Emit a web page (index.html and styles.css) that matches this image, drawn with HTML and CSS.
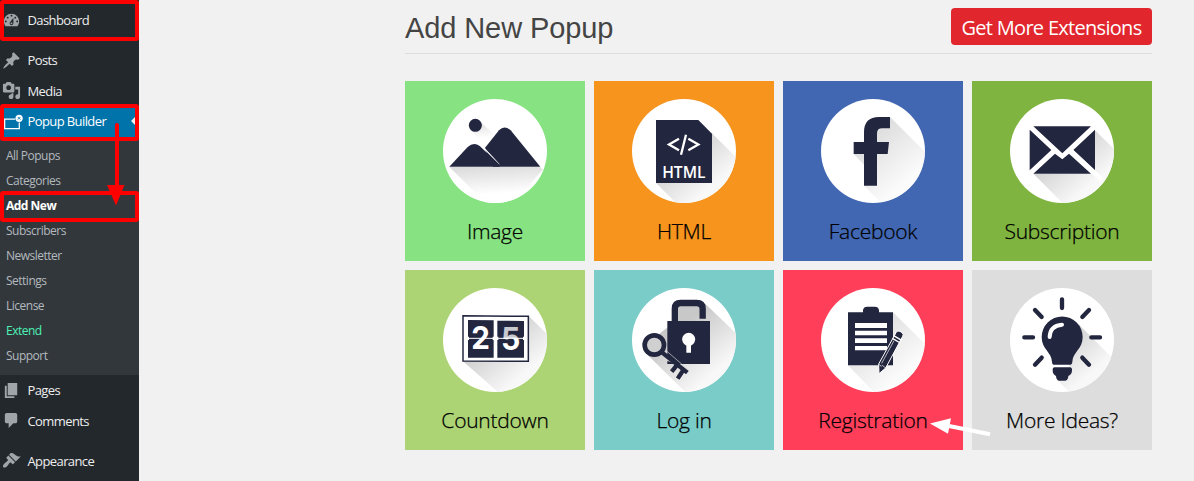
FILE: index.html
```html
<!DOCTYPE html>
<html lang="en">
<head>
    <meta charset="UTF-8">
    <meta name="viewport" content="width=device-width, initial-scale=1.0">
    <title>Add New Popup</title>
    <link rel="stylesheet" href="styles.css">
</head>
<body>
    <nav class="sidebar">
        <a class="menu-item">
            <svg class="menu-icon" viewBox="0 0 20 20"><path d="M3.76 16h12.48c1.1-1.37 1.76-3.11 1.76-5 0-4.42-3.58-8-8-8s-8 3.58-8 8c0 1.89.66 3.63 1.76 5zM10 4c.55 0 1 .45 1 1s-.45 1-1 1-1-.45-1-1 .45-1 1-1zM6 6c.55 0 1 .45 1 1s-.45 1-1 1-1-.45-1-1 .45-1 1-1zm8 0c.55 0 1 .45 1 1s-.45 1-1 1-1-.45-1-1 .45-1 1-1zm-5.37 5.55L12 7v6c0 1.1-.9 2-2 2s-2-.9-2-2c0-.57.24-1.08.63-1.45zM4 10c.55 0 1 .45 1 1s-.45 1-1 1-1-.45-1-1 .45-1 1-1zm12 0c.55 0 1 .45 1 1s-.45 1-1 1-1-.45-1-1 .45-1 1-1zm-5 3c0-.55-.45-1-1-1s-1 .45-1 1 .45 1 1 1 1-.45 1-1z"/></svg>
            <span>Dashboard</span>
        </a>
        <div class="separator"></div>
        <a class="menu-item">
            <svg class="menu-icon" viewBox="0 0 20 20"><path d="M10.44 3.02l1.82-1.82 6.36 6.35-1.83 1.82c-1.05-.68-2.48-.57-3.41.36l-.75.75c-.92.93-1.04 2.35-.35 3.41l-1.83 1.82-2.41-2.41-2.8 2.79c-.42.42-3.38 2.71-3.8 2.29s1.86-3.39 2.28-3.81l2.79-2.79L4.1 9.36l1.83-1.82c1.05.69 2.48.57 3.4-.36l.75-.75c.93-.92 1.05-2.35.36-3.41z"/></svg>
            <span>Posts</span>
        </a>
        <a class="menu-item">
            <svg class="menu-icon" viewBox="0 0 20 20"><path d="M13 11V4c0-.55-.45-1-1-1h-1.67L9 1H5L3.67 3H2c-.55 0-1 .45-1 1v7c0 .55.45 1 1 1h10c.55 0 1-.45 1-1zM7 4.5c1.38 0 2.5 1.12 2.5 2.5S8.38 9.5 7 9.5 4.5 8.38 4.5 7 5.62 4.5 7 4.5zM14 6h5v10.5c0 1.38-1.12 2.5-2.5 2.5S14 17.88 14 16.5s1.12-2.5 2.5-2.5c.17 0 .34.02.5.05V9h-3V6zm-4 8.05V13h2v3.5c0 1.38-1.12 2.5-2.5 2.5S7 17.88 7 16.5 8.12 14 9.5 14c.17 0 .34.02.5.05z"/></svg>
            <span>Media</span>
        </a>
        <a class="menu-item current">
            <svg class="menu-icon popup-icon" viewBox="0 0 20 20">
                <path d="M14 7.500H2.800v10h15.400v-6.500" fill="none" stroke="#fff" stroke-width="1.300"/>
                <circle cx="18" cy="6.600" r="3.800" fill="#fff"/>
                <path d="M16.600 5.200l2.800 2.800m0-2.800l-2.800 2.800" stroke="#0073aa" stroke-width=".9"/>
            </svg>
            <span>Popup Builder</span>
        </a>
        <ul class="submenu">
            <li>All Popups</li>
            <li>Categories</li>
            <li class="active">Add New</li>
            <li>Subscribers</li>
            <li>Newsletter</li>
            <li>Settings</li>
            <li>License</li>
            <li class="extend">Extend</li>
            <li>Support</li>
        </ul>
        <a class="menu-item">
            <svg class="menu-icon" viewBox="0 0 20 20"><path d="M6 15V2h10v13H6zm-1 1h8v2H3V5h2v11z"/></svg>
            <span>Pages</span>
        </a>
        <a class="menu-item">
            <svg class="menu-icon" viewBox="0 0 20 20"><path d="M5 2h9c1.1 0 2 .9 2 2v7c0 1.1-.9 2-2 2h-2l-5 5v-5H5c-1.1 0-2-.9-2-2V4c0-1.1.9-2 2-2z"/></svg>
            <span>Comments</span>
        </a>
        <div class="separator"></div>
        <a class="menu-item">
            <svg class="menu-icon" viewBox="0 0 20 20"><path d="M14.48 11.06L7.41 3.99l1.5-1.5c.5-.56 2.3-.47 3.51.32 1.21.8 1.43 1.28 2.91 2.1 1.18.64 2.45 1.26 4.45.85zm-.71.71L6.7 4.7 4.93 6.47c-.39.39-.39 1.02 0 1.41l1.06 1.06c.39.39.39 1.03 0 1.42-.6.6-1.43 1.11-2.21 1.69-.35.26-.7.53-1.01.84C1.43 14.23.4 16.08 1.4 17.07c.99 1 2.84-.03 4.18-1.36.31-.31.58-.66.85-1.02.57-.78 1.08-1.61 1.69-2.21.39-.39 1.02-.39 1.41 0l1.06 1.06c.39.39 1.02.39 1.41 0z"/></svg>
            <span>Appearance</span>
        </a>
    </nav>

    <main class="content">
        <header class="page-header">
            <h1>Add New Popup</h1>
            <a class="extensions-button">Get More Extensions</a>
        </header>
        <div class="popup-types">
            <div class="tile image">
                <svg class="tile-icon" viewBox="0 0 312 312">
                    <defs>
                        <linearGradient id="shadow" gradientUnits="userSpaceOnUse" x1="130" y1="130" x2="240" y2="260">
                            <stop offset="0" stop-color="#c8c8c8"/>
                            <stop offset="1" stop-color="#f8f8f8"/>
                        </linearGradient>
                        <linearGradient id="groundShadow" x1="0" y1="0" x2=".15" y2="1">
                            <stop offset="0" stop-color="#dadada"/>
                            <stop offset=".8" stop-color="#fff"/>
                        </linearGradient>
                    </defs>
                    <path class="ground" d="M19 204H292L300 212L210 312H128Z"/>
                    <path class="ground" d="M112 68L150 104L124 134L82 92Z"/>
                    <circle class="ink" cx="97" cy="79" r="19.500"/>
                    <path class="ink" d="M125 148L168 94Q184 77 203 94L292 203H150Z"/>
                    <path d="M117 143L169 196L125 148Z" fill="#fff" stroke="#fff" stroke-width="2"/>
                    <path class="ink" d="M19 203L74 144Q92 128 110 141L170 197V203Z"/>
                </svg>
                <span>Image</span>
            </div>
            <div class="tile html">
                <svg class="tile-icon" viewBox="0 0 312 312">
                    <path class="shade" d="M240 103L312 175V312H132L72 252Z"/>
                    <path class="ink" d="M72 63H199L240 104V252H72Z"/>
                    <path class="code" d="M141 119L111 136.500L141 154M169 119L199 136.500L169 154M162 107L147 167"/>
                    <text class="file-text" x="155.500" y="237" textLength="130" lengthAdjust="spacingAndGlyphs">HTML</text>
                </svg>
                <span>HTML</span>
            </div>
            <div class="tile facebook">
                <svg class="tile-icon" viewBox="0 0 312 312">
                    <path class="shade light" d="M207 54L312 158V312H181L129 260V197L98 165L168 150V100Z"/>
                    <path class="ink" d="M129 260V165H98V129H129V100Q129 54 174 54H207V88H184Q168 88 168 104V129H204L200 165H168V260Z"/>
                </svg>
                <span>Facebook</span>
            </div>
            <div class="tile subscription">
                <svg class="tile-icon" viewBox="0 0 312 312">
                    <path class="shade" d="M255 94L312 150V312H158L70 224L255 213Z"/>
                    <path d="M60 82H255V224H60Z" fill="#fff"/>
                    <path class="ink" d="M70 82H243L157 163ZM59 92L124 153L59 214ZM255 92V214L190 153ZM70 224L135 164L157 181L177 164L243 224Z"/>
                    <path d="M185 158L276 243" stroke="#fff" stroke-width="14"/>
                </svg>
                <span>Subscription</span>
            </div>
            <div class="tile countdown">
                <svg class="tile-icon" viewBox="0 0 312 312">
                    <path class="shade" d="M257 84L312 138V312H165L60 220Z"/>
                    <path d="M60 83L256 85V220L60 219Z" fill="#fff" stroke="#23263f" stroke-width="4.500"/>
                    <path class="ink" d="M75 96L152 97V209H75ZM163 98L243 99V209H163Z"/>
                    <text class="digit" x="113" y="184" textLength="56" lengthAdjust="spacingAndGlyphs">2</text>
                    <text class="digit" x="203" y="185" textLength="58" lengthAdjust="spacingAndGlyphs">5</text>
                    <path d="M172 110H234V149H172Z" fill="#23263f" opacity=".25"/>
                    <path d="M75 151H243" stroke="#fff" stroke-width="3"/>
                    <path d="M75 146v10M152 146v10M163 146v10M243 146v10" stroke="#fff" stroke-width="6"/>
                </svg>
                <span>Countdown</span>
            </div>
            <div class="tile login">
                <svg class="tile-icon" viewBox="0 0 312 312">
                    <path class="shade" d="M218 46L312 136V312H160L40 194L66 150L130 100V50Z"/>
                    <path d="M128.500 104V62Q128.500 45 146 45H194Q212 45 212 62V92" fill="none" stroke="#23263f" stroke-width="19"/>
                    <path class="ink" d="M106 99H234V228H106Z"/>
                    <circle cx="170" cy="154" r="19.500" fill="#fff"/>
                    <path d="M163 164H177V194H163Z" fill="#fff"/>
                    <path d="M104 202L140 230L104 218Z" fill="#d0d0d0"/>
                    <path d="M98 184L172 248" stroke="#d8d8d8" stroke-width="2"/>
                    <circle cx="67" cy="171" r="29" fill="#d0d0d0" stroke="#23263f" stroke-width="14"/>
                    <path d="M87 191L166 254M136 230L119 251M154 246L137 272" fill="none" stroke="#23263f" stroke-width="13"/>
                </svg>
                <span>Log in</span>
            </div>
            <div class="tile registration">
                <svg class="tile-icon" viewBox="0 0 312 312">
                    <path class="shade light" d="M216 73L312 168V312H158L81 232Z"/>
                    <path class="ink" d="M81 73H126V66Q128 56 138 56H162Q172 56 174 66V73H216V232H81Z"/>
                    <path d="M102 105H198V120H102ZM102 128H198V142H102ZM102 151H198V165H102ZM102 174H198V187H102Z" fill="#fff"/>
                    <path d="M225 134Q229 126 237 130L243 134Q249 138 245 145L194 240L174 257L173 228Z" fill="#23263f" stroke="#fff" stroke-width="3"/>
                    <path d="M218 143L242 157M214 151L238 165" stroke="#fff" stroke-width="4"/>
                    <path d="M182 226L219 158M174 229L181 235L184 232L194 240" fill="none" stroke="#fff" stroke-width="2"/>
                </svg>
                <span>Registration</span>
            </div>
            <div class="tile ideas">
                <svg class="tile-icon" viewBox="0 0 312 312">
                    <path class="shade" d="M205 108L312 215V312H178L140 274L175 240L190 200Z"/>
                    <path class="ink" d="M130 230Q126 228 126 222C125 192 95 184 95 147A61 61 0 0 1 218 147C218 184 188 192 187 222Q187 228 182 230Z"/>
                    <path class="ink" d="M134 238H180Q187 239 186 247Q186 260 175 264Q174 277 166 278H147Q139 277 138 264Q128 260 128 247Q127 239 134 238Z"/>
                    <path d="M119 147Q120 113 156 110" fill="none" stroke="#fff" stroke-width="12" stroke-linecap="round"/>
                    <path class="rays" d="M156 34V60M75 66L95 87M237 66L217 87M43 148H69M244 148H270M75 230L95 209M237 230L217 209"/>
                </svg>
                <span>More Ideas?</span>
            </div>
        </div>
    </main>

    <!-- walkthrough marks drawn over the page -->
    <svg class="marks" viewBox="0 0 1194 481">
        <g fill="none" stroke="#f00" stroke-width="4">
            <rect x="2" y="2" width="135" height="37" rx="1"/>
            <rect x="2" y="106" width="135" height="33" rx="1"/>
            <rect x="2" y="193" width="135" height="27" rx="1"/>
            <path d="M117 125V188" stroke-linecap="round"/>
        </g>
        <path d="M107 185H124.500L116 205.500Z" fill="#f00"/>
        <path d="M949 426L990 434.300" stroke="#fff" stroke-width="4"/>
        <path d="M930 423.600L951 418.200L948 433.800Z" fill="#fff"/>
    </svg>
</body>
</html>
```
FILE: styles.css
```css
* {
    box-sizing: border-box;
}
body {
    display: flex;
    height: 481px;
    margin: 0;
    position: relative;
    overflow: hidden;
    font-family: "Open Sans", "Noto Sans", sans-serif;
    background-color: #f1f1f1;
}
.sidebar {
    width: 139px;
    height: 481px;
    padding-top: 5px;
    background-color: #23282d;
    flex-shrink: 0;
}
.menu-item {
    display: flex;
    align-items: center;
    gap: 6.5px;
    height: 30.5px;
    padding-left: 2px;
    position: relative;
    font-size: 13px;
    letter-spacing: -0.6px;
    color: #eee;
    white-space: nowrap;
}
.menu-icon {
    width: 19px;
    height: 19px;
    fill: #a0a5aa;
    overflow: visible;
}
.menu-item.current {
    background-color: #0073aa;
    color: #fff;
}
/* notch pointing at the menu */
.menu-item.current::after {
    content: "";
    position: absolute;
    right: 0;
    top: 7px;
    border: 8px solid transparent;
    border-right-color: #f1f1f1;
    border-left: 0;
}
.separator {
    height: 9.5px;
}
.submenu {
    margin: 0;
    padding: 6.5px 0 7px 6px;
    list-style: none;
    background-color: #32373c;
}
.submenu li {
    height: 25px;
    line-height: 25.5px;
    font-size: 12px;
    letter-spacing: -0.5px;
    color: #b4b9be;
}
.submenu .active {
    font-weight: 700;
    color: #fff;
}
.submenu .extend {
    color: #4bf2b4;
}
.content {
    width: 747px;
    margin-left: 266px;
}
.page-header {
    display: flex;
    justify-content: space-between;
    align-items: flex-start;
    height: 54px;
    padding-top: 8px;
    border-bottom: 1px solid #ddd;
}
.page-header h1 {
    margin: 0;
    font-family: "Liberation Sans", Arial, sans-serif;
    font-size: 29px;
    font-weight: normal;
    line-height: 40px;
    letter-spacing: -0.1px;
    color: #444;
}
.extensions-button {
    width: 201px;
    height: 37px;
    border-radius: 4px;
    background-color: #e1262d;
    color: #fff;
    font-size: 20px;
    line-height: 39px;
    letter-spacing: -0.7px;
    text-align: center;
    white-space: nowrap;
}
.popup-types {
    display: grid;
    grid-template-columns: repeat(4, 180px);
    gap: 9px;
    margin-top: 27px;
}
.tile {
    display: flex;
    flex-direction: column;
    align-items: center;
    height: 180px;
    padding-top: 18px;
    font-size: 21px;
    line-height: 30px;
    color: #000;
}
.tile span {
    margin-top: 13px;
    font-weight: 300;
    letter-spacing: -0.25px;
    -webkit-text-stroke: 0.25px #000;
}
.tile-icon {
    width: 104px;
    height: 104px;
    border-radius: 50%;
    background-color: #fff;
}
.image { background-color: #87e381; }
.html { background-color: #f7941d; }
.facebook { background-color: #4267b2; }
.subscription { background-color: #7fb441; }
.countdown { background-color: #add474; }
.login { background-color: #7accc8; }
.registration { background-color: #ff3f5a; }
.ideas { background-color: #ddd; }
.ink {
    fill: #23263f;
}
.shade {
    fill: url(#shadow);
}
.shade.light {
    opacity: 0.6;
}
.ground {
    fill: url(#groundShadow);
}
.code {
    fill: none;
    stroke: #fff;
    stroke-width: 7;
}
.file-text {
    fill: #fff;
    font-size: 46px;
    font-weight: 600;
    text-anchor: middle;
}
.digit {
    fill: #fff;
    font-family: Inter, sans-serif;
    font-size: 94px;
    font-weight: 700;
    text-anchor: middle;
}
.rays {
    fill: none;
    stroke: #23263f;
    stroke-width: 13;
    stroke-linecap: round;
}
.marks {
    position: absolute;
    left: 0;
    top: 0;
    width: 1194px;
    height: 481px;
    pointer-events: none;
}
```
